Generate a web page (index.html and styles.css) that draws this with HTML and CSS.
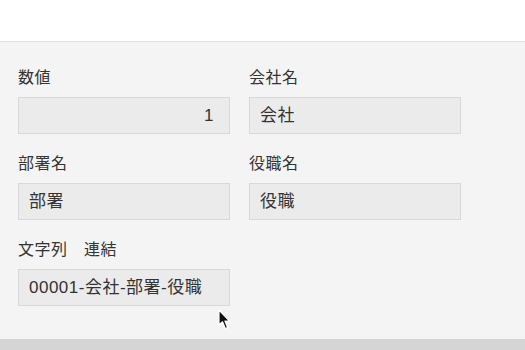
FILE: index.html
```html
<!DOCTYPE html>
<html lang="ja">
<head>
    <meta charset="UTF-8">
    <meta name="viewport" content="width=device-width, initial-scale=1.0">
    <title>文字列 連結</title>
    <link rel="stylesheet" href="styles.css">
</head>
<body>
    <div class="page">
        <div class="topbar"></div>

        <div class="form-area">
            <div class="form-grid">
                <div class="field">
                    <label class="field-label">数値</label>
                    <div class="field-input number">1</div>
                </div>
                <div class="field">
                    <label class="field-label">会社名</label>
                    <div class="field-input">会社</div>
                </div>
                <div class="field">
                    <label class="field-label">部署名</label>
                    <div class="field-input">部署</div>
                </div>
                <div class="field">
                    <label class="field-label">役職名</label>
                    <div class="field-input">役職</div>
                </div>
                <div class="field">
                    <label class="field-label">文字列　連結</label>
                    <div class="field-input">00001-会社-部署-役職</div>
                </div>
            </div>

            <svg class="cursor" width="14" height="22" viewBox="0 0 14 22">
                <path d="M1 1 L1 16 L4.5 12.8 L7.3 19.5 L9.6 18.5 L6.9 12 L11.5 12 Z" fill="#111" stroke="#fff" stroke-width="1.2" stroke-linejoin="round"/>
            </svg>
        </div>

        <div class="bottombar"></div>
    </div>
</body>
</html>
```

FILE: styles.css
```css
body {
    margin: 0;
    font-family: "Liberation Sans", "Noto Sans CJK JP", sans-serif;
    color: #333;
}
.page {
    height: 100vh;
    display: flex;
    flex-direction: column;
}
.topbar {
    height: 41px;
    background: #fff;
    border-bottom: 1px solid #e2e2e2;
}
.form-area {
    flex: 1;
    position: relative;
    background: #f4f4f4;
    padding: 26px 18px 0;
}
.form-grid {
    display: grid;
    grid-template-columns: 212px 212px;
    column-gap: 19px;
    row-gap: 20px;
}
.field {
    display: flex;
    flex-direction: column;
    gap: 9px;
}
.field-label {
    font-size: 16px;
    line-height: 20px;
    letter-spacing: 0.5px;
    color: #333;
}
.field-input {
    box-sizing: border-box;
    height: 37px;
    line-height: 35px;
    padding: 0 10px;
    background: #ebebeb;
    border: 1px solid #d8d8d8;
    font-size: 17px;
    letter-spacing: 0.5px;
    color: #333;
}
.field-input.number {
    text-align: right;
    padding-right: 15px;
}
.cursor {
    position: absolute;
    left: 218px;
    top: 267px;
}
.bottombar {
    height: 11px;
    background: #d5d5d5;
}
```
